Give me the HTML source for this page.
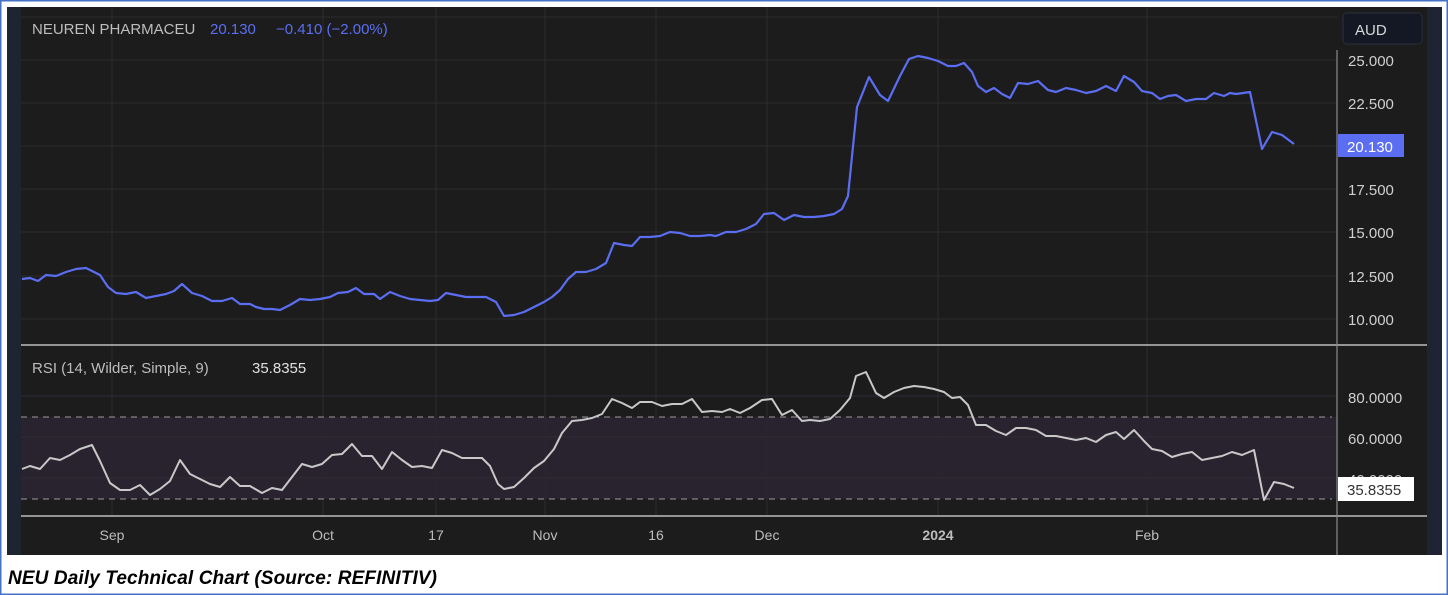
<!DOCTYPE html>
<html><head><meta charset="utf-8"><style>
html,body{margin:0;padding:0;background:#fff;}
body{width:1448px;height:595px;position:relative;overflow:hidden;font-family:"Liberation Sans",sans-serif;}
</style></head><body>
<svg width="1448" height="595" viewBox="0 0 1448 595" style="position:absolute;left:0;top:0">
<rect x="0.5" y="0.5" width="1447" height="594" fill="#fff" stroke="#4472c4" stroke-width="2"/>
<rect x="7" y="7" width="1435" height="548" fill="#1c1c1c"/>
<rect x="7" y="7" width="14" height="548" fill="#1f2433"/>
<rect x="1427" y="7" width="15" height="548" fill="#1f2433"/>
<g stroke="#2c2c2c" stroke-width="1">
<line x1="21" y1="17" x2="1337" y2="17"/>
<line x1="21" y1="60" x2="1337" y2="60"/><line x1="21" y1="103" x2="1337" y2="103"/>
<line x1="21" y1="146" x2="1337" y2="146"/><line x1="21" y1="189" x2="1337" y2="189"/>
<line x1="21" y1="232" x2="1337" y2="232"/><line x1="21" y1="276" x2="1337" y2="276"/>
<line x1="21" y1="319" x2="1337" y2="319"/>
<line x1="112" y1="7" x2="112" y2="516"/><line x1="323" y1="7" x2="323" y2="516"/>
<line x1="436" y1="7" x2="436" y2="516"/><line x1="545" y1="7" x2="545" y2="516"/>
<line x1="656" y1="7" x2="656" y2="516"/><line x1="767" y1="7" x2="767" y2="516"/>
<line x1="938" y1="7" x2="938" y2="516"/><line x1="1147" y1="7" x2="1147" y2="516"/>
</g>
<rect x="21" y="417" width="1316" height="82" fill="#2a2433" opacity="0.85"/>
<g stroke="#2e2c36" stroke-width="1">
<line x1="21" y1="396" x2="1337" y2="396"/><line x1="21" y1="437" x2="1337" y2="437"/><line x1="21" y1="478" x2="1337" y2="478"/>
</g>
<g stroke="#9a9a9a" stroke-width="1" stroke-dasharray="6,5">
<line x1="21" y1="417" x2="1332" y2="417"/><line x1="21" y1="499" x2="1332" y2="499"/>
</g>
<line x1="21" y1="345" x2="1427" y2="345" stroke="#bdbdbd" stroke-width="1.5"/>
<line x1="21" y1="516" x2="1427" y2="516" stroke="#bdbdbd" stroke-width="1.5"/>
<line x1="1337" y1="50" x2="1337" y2="555" stroke="#8a8a8a" stroke-width="1.2"/>
<polyline fill="none" stroke="#5b6ef2" stroke-width="2.2" stroke-linejoin="round" points="22,279 30,278 38,281 46,275 56,276 66,272 76,269 86,268 92,271 100,275 108,287 116,293 126,294 136,292 146,298 156,296 166,294 174,291 182,284 192,293 202,296 212,301 222,301 232,298 240,304 250,304 256,307 264,309 272,309 280,310 290,305 300,299 310,300 320,299 330,297 338,293 348,292 356,288 364,294 374,294 380,299 390,292 400,296 410,299 420,300 430,301 438,300 446,293 456,295 466,297 476,297 486,297 496,302 504,316 514,315 524,312 534,307 544,302 552,297 560,290 568,279 576,272 586,272 596,269 606,263 614,243 624,245 632,246 640,237 650,237 660,236 670,232 680,233 690,236 700,236 710,235 716,236 726,232 736,232 746,229 756,224 764,214 774,213 784,220 794,215 804,217 814,217 824,216 834,214 842,209 848,196 857,107 869,77 880,95 888,101 900,76 909,59 918,56 928,58 938,61 948,66 956,66 964,63 972,72 978,86 986,92 994,88 1002,94 1010,98 1018,83 1028,84 1038,81 1048,90 1056,92 1066,88 1076,90 1086,93 1096,91 1106,86 1116,91 1124,76 1134,82 1142,91 1152,93 1160,99 1168,96 1176,95 1186,101 1196,99 1206,99 1214,93 1224,96 1230,93 1236,94 1250,92 1262,149 1272,132 1282,135 1294,144"/>
<polyline fill="none" stroke="#c8c8c8" stroke-width="2" stroke-linejoin="round" points="22,469 30,466 40,469 50,458 60,460 70,455 80,449 92,445 100,461 110,483 120,490 130,490 140,485 150,495 160,489 170,481 180,460 190,474 200,479 210,484 220,487 230,477 240,486 250,486 262,493 272,488 282,490 292,477 302,464 312,467 322,464 332,455 342,454 352,444 362,456 372,456 382,469 392,452 402,460 412,467 422,466 432,468 442,450 452,453 462,458 472,458 482,458 490,466 498,484 504,489 514,487 524,478 534,468 544,461 554,449 562,433 572,421 582,420 592,418 602,414 612,399 622,403 632,408 640,402 652,402 662,406 672,404 682,404 692,399 702,412 712,411 722,412 730,409 740,413 750,408 762,400 772,399 782,415 792,410 802,421 810,420 820,421 830,419 840,410 850,398 856,376 866,372 876,393 884,398 894,392 904,388 914,386 924,387 934,389 944,392 952,398 960,397 968,405 976,425 986,425 996,431 1006,435 1016,428 1026,428 1036,430 1046,436 1056,436 1066,438 1076,440 1086,438 1096,442 1106,435 1116,432 1124,439 1134,430 1144,441 1152,449 1162,451 1172,457 1182,454 1192,452 1202,460 1212,458 1222,456 1232,452 1242,455 1254,450 1264,500 1274,482 1284,484 1294,488"/>
<rect x="1343" y="13" width="79" height="31" rx="4" fill="#141824" stroke="#2a2f3d"/>
<text x="1355" y="35" fill="#d8d8d8" font-size="15">AUD</text>
<g fill="#cfcfcf" font-size="15">
<text x="1348" y="66">25.000</text><text x="1348" y="109">22.500</text>
<text x="1348" y="195">17.500</text><text x="1348" y="238">15.000</text>
<text x="1348" y="282">12.500</text><text x="1348" y="325">10.000</text>
<text x="1348" y="403">80.0000</text><text x="1348" y="444">60.0000</text>
<text x="1348" y="485">40.0000</text>
</g>
<rect x="1338" y="134" width="66" height="23" fill="#5b6ef2"/>
<text x="1347" y="152" fill="#fff" font-size="15">20.130</text>
<rect x="1338" y="477" width="76" height="24" fill="#fff"/>
<text x="1347" y="495" fill="#333" font-size="15">35.8355</text>
<text x="32" y="34" fill="#bdbdbd" font-size="15">NEUREN PHARMACEU</text>
<text x="210" y="34" fill="#5b6ef2" font-size="15">20.130</text>
<text x="276" y="34" fill="#5b6ef2" font-size="15">−0.410 (−2.00%)</text>
<text x="32" y="373" fill="#bdbdbd" font-size="15">RSI (14, Wilder, Simple, 9)</text>
<text x="252" y="373" fill="#e0e0e0" font-size="15">35.8355</text>
<g fill="#bdbdbd" font-size="14" text-anchor="middle">
<text x="112" y="540">Sep</text><text x="323" y="540">Oct</text><text x="436" y="540">17</text>
<text x="545" y="540">Nov</text><text x="656" y="540">16</text><text x="767" y="540">Dec</text>
<text x="938" y="540" font-weight="bold">2024</text><text x="1147" y="540">Feb</text>
</g>
<text x="8" y="584" fill="#000" font-size="19" font-weight="bold" font-style="italic" textLength="429">NEU Daily Technical Chart (Source: REFINITIV)</text>
</svg>
</body></html>
